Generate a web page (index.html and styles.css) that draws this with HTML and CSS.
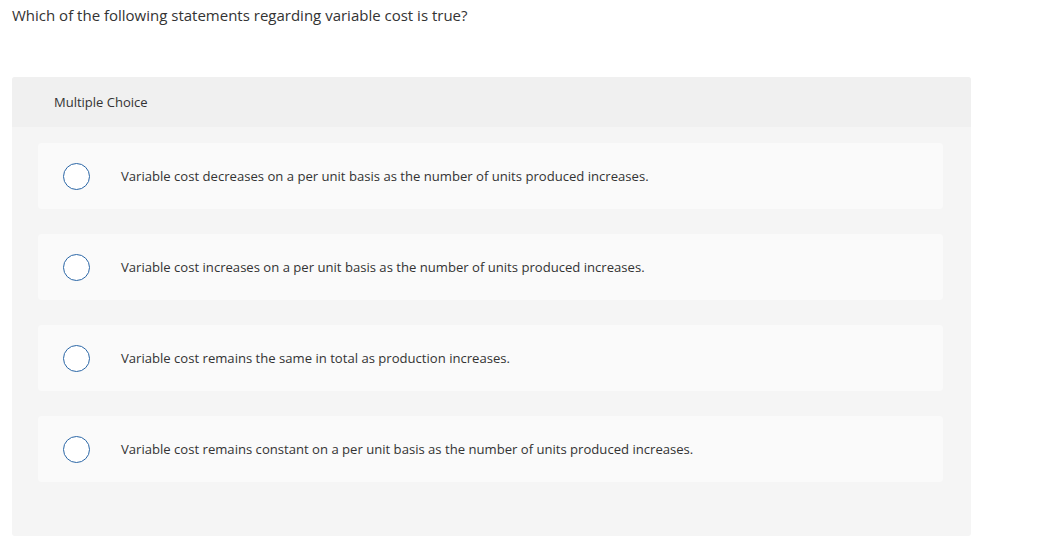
FILE: index.html
```html
<!DOCTYPE html>
<html>
<head>
<meta charset="utf-8">
<link rel="stylesheet" href="styles.css">
</head>
<body>
<div class="page">
  <p class="question">Which of the following statements regarding variable cost is true?</p>
  <section class="panel">
    <div class="panel-head">Multiple Choice</div>
    <div class="panel-body">
      <label class="option"><span class="radio"></span><span class="opt-text">Variable cost decreases on a per unit basis as the number of units produced increases.</span></label>
      <label class="option"><span class="radio"></span><span class="opt-text">Variable cost increases on a per unit basis as the number of units produced increases.</span></label>
      <label class="option"><span class="radio"></span><span class="opt-text">Variable cost remains the same in total as production increases.</span></label>
      <label class="option"><span class="radio"></span><span class="opt-text">Variable cost remains constant on a per unit basis as the number of units produced increases.</span></label>
    </div>
  </section>
</div>
</body>
</html>
```

FILE: styles.css
```css
html, body {
  margin: 0;
  padding: 0;
  background: #ffffff;
}
body {
  font-family: "Open Sans", "Lato", sans-serif;
  color: #333333;
}
.page {
  padding: 5px 70px 0 12px;
}
.question {
  margin: 0;
  font-size: 15px;
  line-height: 20px;
  color: #333;
}
.panel {
  margin-top: 52px;
  background: #f5f5f5;
  border-radius: 3px;
  overflow: hidden;
  width: 959px;
}
.panel-head {
  height: 50px;
  background: #f0f0f0;
  display: flex;
  align-items: center;
  padding-left: 42px;
  font-size: 13px;
  color: #333;
}
.panel-body {
  padding: 16px 28px 54px 26px;
  display: flex;
  flex-direction: column;
  gap: 25px;
}
.option {
  height: 66px;
  background: #fafafa;
  border-radius: 4px;
  display: flex;
  align-items: center;
  padding-left: 25px;
  font-size: 13.1px;
  color: #333;
}
.radio {
  width: 25px;
  height: 25px;
  border: 1px solid #2a66a6;
  border-radius: 50%;
  background: #ffffff;
  flex: none;
  margin-right: 31px;
}
.opt-text {
  line-height: 18px;
}
```
